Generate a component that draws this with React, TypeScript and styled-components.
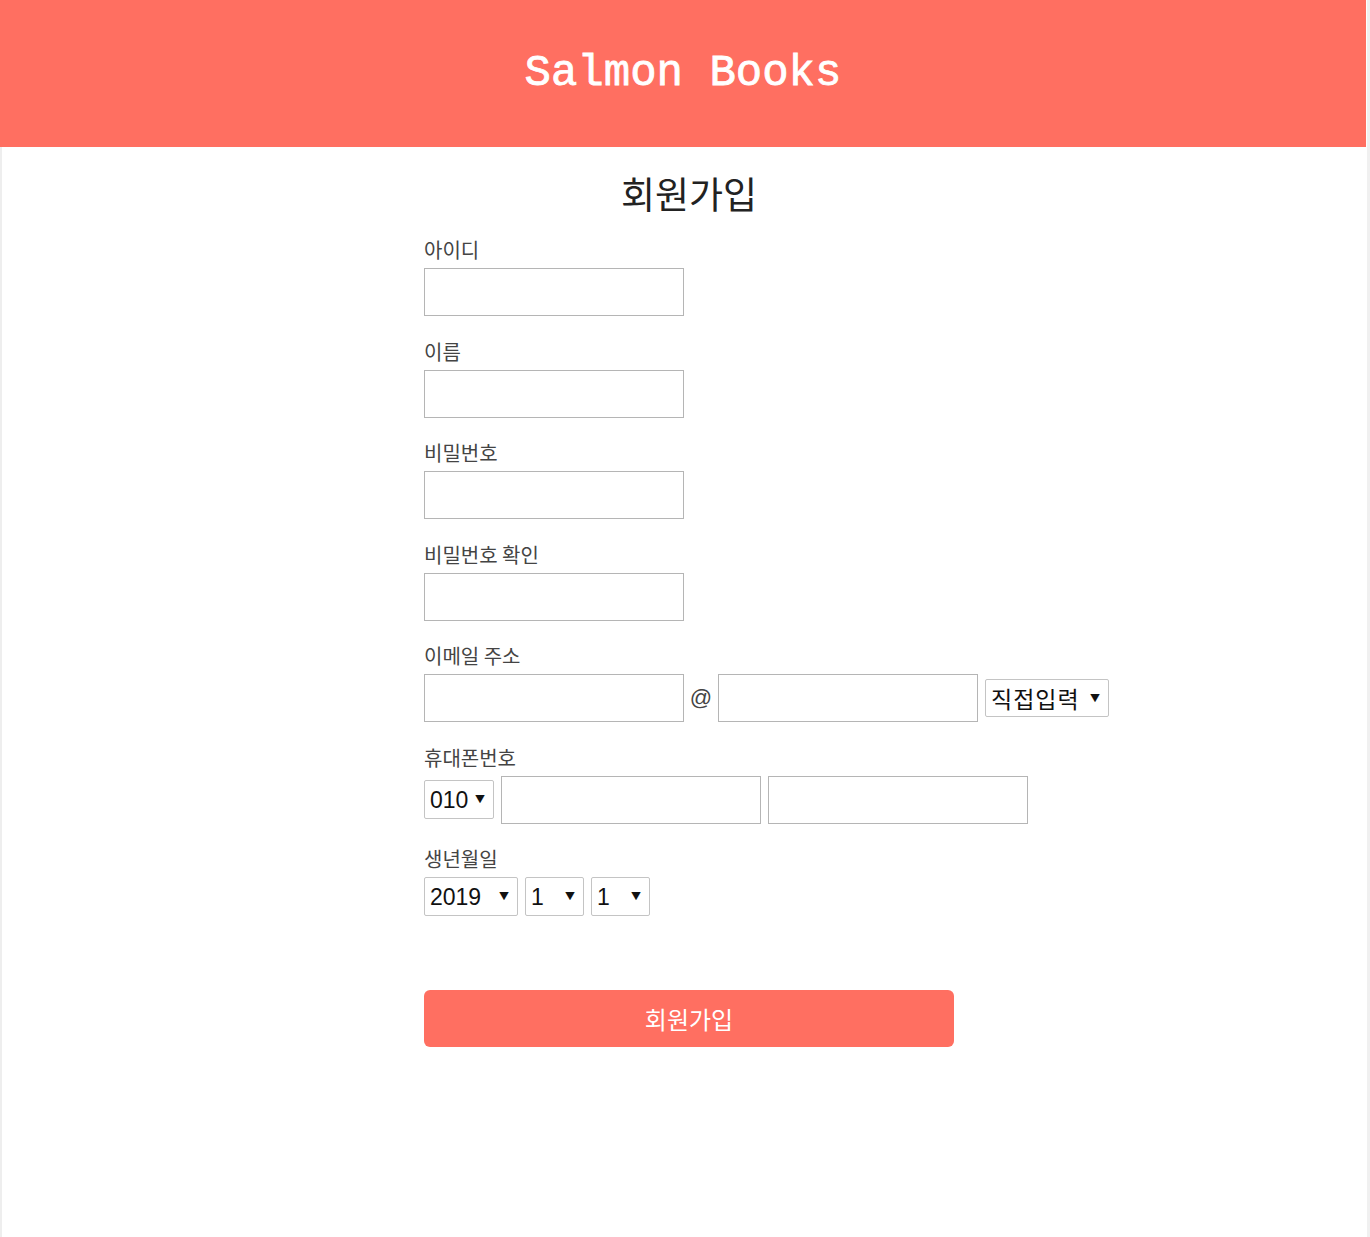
import React from "react";
import styled, { createGlobalStyle } from "styled-components";

const GlobalStyle = createGlobalStyle`
  html, body {
    margin: 0;
    padding: 0;
    background: #ffffff;
  }
  body {
    font-family: "Noto Sans CJK KR", "Noto Sans", sans-serif;
  }
`;

const Shell = styled.div`
  display: flex;
  width: 1370px;
  min-height: 1237px;
`;

const Page = styled.div`
  display: flex;
  flex-direction: column;
  width: 1367px;
`;

const EdgeStrip = styled.div`
  width: 3px;
  border-left: 1px solid #ffffff;
  background: #f0f0f0;
`;

const Header = styled.header`
  height: 147px;
  width: 1366px;
  background-color: #ff6f61;
  display: flex;
  align-items: center;
  justify-content: center;

  .logo {
    font-family: "Liberation Mono", "Courier New", monospace;
    font-size: 44px;
    font-weight: normal;
    -webkit-text-stroke: 0.8px #ffffff;
    color: #ffffff;
    margin: 0;
    padding-bottom: 2px;
  }
`;

const Main = styled.main`
  flex: 1;
  border-left: 2px solid #eeeeee;
  padding-left: 10px;
`;

const Form = styled.form`
  width: 530px;
  margin: 0 auto;
  display: flex;
  flex-direction: column;

  .title {
    font-size: 37px;
    font-weight: 400;
    color: #222222;
    text-align: center;
    margin: 20px 0 16px;
    line-height: 52px;
  }
`;

const Field = styled.div`
  display: flex;
  flex-direction: column;
  align-items: flex-start;
  margin-bottom: 20.5px;

  label {
    font-size: 20px;
    color: #444444;
    line-height: 28px;
    margin-top: 1px;
    margin-bottom: 4px;
  }
`;

const Row = styled.div<{ $gap?: number }>`
  display: flex;
  align-items: center;
  width: max-content;
  gap: ${(p) => p.$gap ?? 7}px;
`;

const TextInput = styled.input`
  box-sizing: border-box;
  flex-shrink: 0;
  width: 260px;
  height: 48px;
  margin: 0;
  border: 1px solid #b5b5b5;
  background: #ffffff;
  padding: 0 8px;
  font-size: 18px;
  outline: none;
`;

const At = styled.span`
  font-family: "Liberation Sans", Arial, sans-serif;
  font-size: 22px;
  color: #444444;
  width: 34px;
  text-align: center;
`;

const SelectWrap = styled.div<{ $width: number; $offset?: number; $height?: number }>`
  position: relative;
  flex-shrink: 0;
  width: ${(p) => p.$width}px;
  height: ${(p) => p.$height ?? 39}px;
  margin-left: ${(p) => p.$offset ?? 0}px;

  &::after {
    content: "▼";
    position: absolute;
    right: 9px;
    top: 11px;
    font-size: 10px;
    color: #111111;
    pointer-events: none;
  }
`;

const Select = styled.select<{ $korean?: boolean }>`
  appearance: none;
  -webkit-appearance: none;
  box-sizing: border-box;
  width: 100%;
  height: 100%;
  margin: 0;
  border: 1px solid #c4c4c4;
  border-radius: 2px;
  background: #ffffff;
  color: #111111;
  padding: 0 0 0 5px;
  font-family: ${(p) =>
    p.$korean
      ? `"Noto Sans CJK KR", sans-serif`
      : `"Liberation Sans", Arial, sans-serif`};
  font-size: 23px;
  letter-spacing: ${(p) => (p.$korean ? 1 : 0)}px;
  outline: none;
`;

const SubmitButton = styled.button`
  margin-top: 53.5px;
  width: 530px;
  height: 57px;
  border: none;
  border-radius: 6px;
  background-color: #ff6f61;
  color: #ffffff;
  font-family: "Noto Sans CJK KR", sans-serif;
  font-size: 24px;
  cursor: pointer;
`;

const years = [2019, 2018, 2017, 2016, 2015];
const months = Array.from({ length: 12 }, (_, i) => i + 1);
const days = Array.from({ length: 31 }, (_, i) => i + 1);

const simpleFields = ["아이디", "이름", "비밀번호", "비밀번호 확인"];

const App = () => {
  return (
    <>
      <GlobalStyle />
      <Shell>
        <Page>
          <Header>
            <h1 className="logo">Salmon Books</h1>
          </Header>
          <Main>
            <Form onSubmit={(e) => e.preventDefault()}>
              <h2 className="title">회원가입</h2>

              {simpleFields.map((name) => (
                <Field key={name}>
                  <label>{name}</label>
                  <TextInput
                    type={name.startsWith("비밀번호") ? "password" : "text"}
                  />
                </Field>
              ))}

              <Field>
                <label>이메일 주소</label>
                <Row $gap={0}>
                  <TextInput />
                  <At>@</At>
                  <TextInput />
                  <SelectWrap $width={124} $offset={7} $height={38}>
                    <Select $korean>
                      <option>직접입력</option>
                      <option>naver.com</option>
                      <option>gmail.com</option>
                    </Select>
                  </SelectWrap>
                </Row>
              </Field>

              <Field>
                <label>휴대폰번호</label>
                <Row>
                  <SelectWrap $width={70}>
                    <Select>
                      <option>010</option>
                      <option>011</option>
                      <option>016</option>
                    </Select>
                  </SelectWrap>
                  <TextInput />
                  <TextInput />
                </Row>
              </Field>

              <Field>
                <label>생년월일</label>
                <Row>
                  <SelectWrap $width={94}>
                    <Select>
                      {years.map((y) => (
                        <option key={y}>{y}</option>
                      ))}
                    </Select>
                  </SelectWrap>
                  <SelectWrap $width={59}>
                    <Select>
                      {months.map((m) => (
                        <option key={m}>{m}</option>
                      ))}
                    </Select>
                  </SelectWrap>
                  <SelectWrap $width={59}>
                    <Select>
                      {days.map((d) => (
                        <option key={d}>{d}</option>
                      ))}
                    </Select>
                  </SelectWrap>
                </Row>
              </Field>

              <SubmitButton type="submit">회원가입</SubmitButton>
            </Form>
          </Main>
        </Page>
        <EdgeStrip />
      </Shell>
    </>
  );
};

export default App;
